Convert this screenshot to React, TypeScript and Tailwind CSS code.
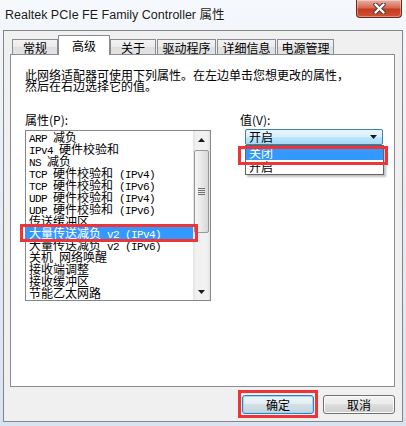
import type { ReactNode } from 'react'

const properties = [
  'ARP 减负',
  'IPv4 硬件校验和',
  'NS 减负',
  'TCP 硬件校验和 (IPv4)',
  'TCP 硬件校验和 (IPv6)',
  'UDP 硬件校验和 (IPv4)',
  'UDP 硬件校验和 (IPv6)',
  '传送缓冲区',
  '大量传送减负 v2 (IPv4)',
  '大量传送减负 v2 (IPv6)',
  '关机 网络唤醒',
  '接收端调整',
  '接收缓冲区',
  '节能乙太网路',
]

const tabs = [
  { label: '常规', w: 'w-[46px]', gap: '' },
  { label: '高级', w: 'w-[52px]', gap: '', active: true },
  { label: '关于', w: 'w-[46px]', gap: '' },
  { label: '驱动程序', w: 'w-[59px]', gap: 'ml-px' },
  { label: '详细信息', w: 'w-[59px]', gap: 'ml-px' },
  { label: '电源管理', w: 'w-[57px]', gap: 'ml-px' },
]

// ascii runs get the narrow mono face, like SimSun's half-width glyphs
function Mixed({ text }: { text: string }) {
  const parts = text.split(/([\x20-\x7e]+)/).filter(Boolean)
  return (
    <>
      {parts.map((p, i) =>
        /^[\x20-\x7e]+$/.test(p) ? (
          <span key={i} className="font-['Liberation_Mono',monospace] text-[11px] tracking-[-0.6px]">
            {p}
          </span>
        ) : (
          <span key={i}>{p}</span>
        ),
      )}
    </>
  )
}

function Arrow({ up }: { up?: boolean }) {
  return (
    <svg width="7" height="4" viewBox="0 0 7 4">
      <path d={up ? 'M0 4h7L3.5 0z' : 'M0 0h7L3.5 4z'} fill="#1a1a1a" />
    </svg>
  )
}

function RedBox({ className }: { className: string }) {
  return <div className={`pointer-events-none absolute border-[3px] border-[#ef3438] ${className}`} />
}

function Button({ children, primary }: { children: ReactNode; primary?: boolean }) {
  return (
    <div
      className={`relative flex h-[19px] w-[72px] items-center justify-center rounded-[3px] border text-[12px] leading-[12px] ${
        primary
          ? 'border-[#3c7fb1] bg-[linear-gradient(#eef5f9,#e2ecf2_50%,#d2dfe7_50%,#c4d5df)] shadow-[inset_0_0_0_1px_#8fdcff]'
          : 'border-[#707070] bg-[linear-gradient(#f2f2f2,#ebebeb_50%,#dddddd_50%,#cfcfcf)] shadow-[inset_0_0_0_1px_#fcfcfc]'
      }`}
    >
      {children}
      {primary && <RedBox className="left-[-5px] top-[-6px] h-[28px] w-[80px]" />}
    </div>
  )
}

export default function App() {
  return (
    <div className="relative h-[426px] w-[406px] overflow-hidden bg-[linear-gradient(#f5f8fc,#e7eef6_40%,#d8e4f1)] font-['Noto_Sans_CJK_SC',sans-serif] text-black">
      {/* title bar */}
      <div className="flex h-[30px] justify-between">
        <div className="mt-[7px] pl-[5px] font-['Liberation_Sans','Noto_Sans_CJK_SC',sans-serif] text-[12.5px] leading-[16px] text-[#1b1b1b] [text-shadow:0_0_6px_#fff,0_0_3px_#fff]">
          Realtek PCIe FE Family Controller 属性
        </div>
        <div className="mr-[4px] flex h-[18px] w-[46px] items-center justify-center rounded-b-[4px] border border-t-0 border-[#6b2a20] bg-[linear-gradient(#eab1a4,#d76a53_45%,#c53b21_55%,#cf5334)] shadow-[inset_0_0_0_1px_rgba(255,255,255,0.35)]">
          <svg width="13" height="11" viewBox="0 0 13 11">
            <path d="M2.5 1.5l8 8M10.5 1.5l-8 8" stroke="#444" strokeWidth="4.5" strokeLinecap="round" />
            <path d="M2.5 1.5l8 8M10.5 1.5l-8 8" stroke="#fff" strokeWidth="2.4" strokeLinecap="round" />
          </svg>
        </div>
      </div>

      {/* client area */}
      <div className="ml-[3px] h-[392px] w-[400px] border border-[#858585] bg-[#f0f0f0] pl-[6px] pt-[4px]">
        <div className="relative z-10 -mb-px flex h-[20px] items-end pl-[2px]">
          {tabs.map((t) =>
            t.active ? (
              <div
                key={t.label}
                className={`flex h-[20px] ${t.w} items-center justify-center border border-b-0 border-[#898c95] bg-white text-[12px] leading-[12px]`}
              >
                {t.label}
              </div>
            ) : (
              <div
                key={t.label}
                className={`mb-px flex h-[15px] ${t.w} ${t.gap} items-center justify-center border border-b-0 border-[#898c95] bg-[linear-gradient(#f3f3f3,#ebebeb_50%,#dedede_50%,#e3e3e3)] pt-px text-[12px] leading-[12px]`}
              >
                {t.label}
              </div>
            ),
          )}
        </div>

        <div className="h-[333px] w-[385px] border border-[#898c95] bg-white pl-[14px] pt-[14px]">
          <p className="text-[12px] leading-[11px]">
            此网络适配器可使用下列属性。在左边单击您想更改的属性，
            <br />
            然后在右边选择它的值。
          </p>

          <div className="mt-[23px] flex">
            <div className="w-[186px]">
              <div className="text-[12px] leading-[12px]">属性(P):</div>
              <div className="relative mt-[4px] flex h-[171px] border border-[#828790] bg-white">
                <div className="flex-1">
                  {properties.map((p, i) => (
                    <div
                      key={p}
                      className={`h-[12px] whitespace-pre pl-[3px] text-[12px] leading-[12px] ${
                        i === 8 ? 'bg-[#3399ff] text-white' : ''
                      }`}
                    >
                      <Mixed text={p} />
                    </div>
                  ))}
                </div>
                <div className="flex w-[17px] flex-col bg-[linear-gradient(90deg,#e3e3e3,#f1f1f1_20%,#f1f1f1_80%,#e6e6e6)]">
                  <div className="flex h-[17px] items-center justify-center">
                    <Arrow up />
                  </div>
                  <div className="flex-1">
                    <div className="mx-px mt-[2px] flex h-[83px] flex-col items-center justify-center gap-[1px] rounded-[2px] border border-[#979797] bg-[linear-gradient(90deg,#f6f6f6,#e8e8e8_50%,#d8d8d8)]">
                      <div className="h-px w-[7px] bg-[#707070]" />
                      <div className="h-px w-[7px] bg-[#707070]" />
                      <div className="h-px w-[7px] bg-[#707070]" />
                      <div className="h-px w-[7px] bg-[#707070]" />
                    </div>
                  </div>
                  <div className="flex h-[17px] items-center justify-center">
                    <Arrow />
                  </div>
                </div>
                <RedBox className="left-[-6px] top-[93px] h-[18px] w-[178px]" />
              </div>
            </div>

            <div className="ml-[29px]">
              <div className="text-[12px] leading-[12px]">值(V):</div>
              <div className="relative ml-[5px] mt-[3px] flex h-[16px] w-[138px] items-center justify-between rounded-[2px] border border-[#3c7fb1] bg-[linear-gradient(#eaf6fd,#d9f0fc_50%,#bee6fd_50%,#a7d9f5)] pl-[3px] pr-[5px] text-[12px] leading-[12px]">
                <span>开启</span>
                <Arrow />
                <div className="absolute left-[-1px] top-[15px] h-[30px] w-[139px] border border-[#646464] bg-white shadow-[2px_2px_2px_rgba(0,0,0,0.25)]">
                  <div className="flex h-[14px] items-center bg-[#3399ff] pl-[3px] text-white">关闭</div>
                  <div className="flex h-[14px] items-center pl-[3px]">开启</div>
                </div>
                <RedBox className="left-[-8px] top-[16px] h-[19px] w-[150px]" />
              </div>
            </div>
          </div>
        </div>

        <div className="mt-[8px] flex w-[385px] justify-end gap-[9px]">
          <Button primary>确定</Button>
          <Button>取消</Button>
        </div>
      </div>
    </div>
  )
}
